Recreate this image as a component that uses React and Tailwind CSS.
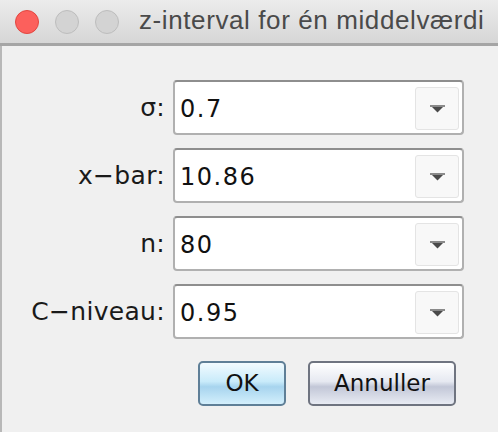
import React from "react";

function Combo({ value }) {
  return (
    <div className="flex h-[55px] w-[291px] items-stretch rounded-[4px] border-2 border-[#b0b0b0] border-t-[#8e8e8e] bg-white pl-[5px] pr-[3px] pt-[5px] pb-[3px]">
      <div className="flex flex-1 items-center text-[24px] leading-none tracking-[1.5px] text-[#111]">
        {value}
      </div>
      <div className="flex w-[44px] items-center justify-center rounded-[3px] border border-[#e4e4e4] bg-[#f8f8f8]">
        <svg width="15" height="8" viewBox="0 0 15 8">
          <rect x="0" y="0" width="15" height="2" fill="#8a8a8a" />
          <polygon points="2,2 13,2 7.5,7.5" fill="#4a4a4a" />
        </svg>
      </div>
    </div>
  );
}

export default function App() {
  const rows = [
    ["σ:", "0.7"],
    ["x−bar:", "10.86"],
    ["n:", "80"],
    ["C−niveau:", "0.95"],
  ];
  return (
    <div className="flex h-[432px] w-[498px] flex-col overflow-hidden bg-[#f0f0f0] font-['DejaVu_Sans',sans-serif]">
      <div className="flex h-[46px] shrink-0 items-center border-b-[3px] border-[#a5a5a5] bg-[linear-gradient(to_bottom,#ececec,#d6d6d6)] pl-[15px]">
        <div className="h-[24px] w-[24px] rounded-full border border-[#e2463f] bg-[#fc605c]" />
        <div className="ml-[16px] h-[24px] w-[24px] rounded-full border border-[#bdbdbd] bg-[#d3d3d3]" />
        <div className="ml-[16px] h-[24px] w-[24px] rounded-full border border-[#bdbdbd] bg-[#d3d3d3]" />
        <div className="ml-[20px] whitespace-nowrap pb-[2px] font-['Liberation_Sans',sans-serif] text-[26px] tracking-[0.6px] text-[#4a4a4a]">
          z-interval for én middelværdi
        </div>
      </div>
      <div className="flex flex-1 flex-col border-l-2 border-[#b8b8b8] pt-[34px]">
        <div className="grid grid-cols-[163px_291px] gap-x-[8px] gap-y-[13px]">
          {rows.map(([label, value]) => (
            <React.Fragment key={label}>
              <div className="flex items-center justify-end text-[25px] leading-none tracking-[0.3px] text-[#1a1a1a]">
                {label}
              </div>
              <Combo value={value} />
            </React.Fragment>
          ))}
        </div>
        <div className="mt-[22px] flex justify-end gap-[22px] pr-[42px]">
          <button className="flex h-[45px] w-[88px] items-center justify-center rounded-[5px] border-2 border-[#5f7f97] bg-[linear-gradient(to_bottom,#f2fbff_0%,#c9ebfa_45%,#a7d4ee_58%,#d3effc_100%)] text-[23px] text-[#111]">
            OK
          </button>
          <button className="flex h-[45px] w-[148px] items-center justify-center rounded-[5px] border-2 border-[#6f7480] bg-[linear-gradient(to_bottom,#ffffff_0%,#e6e9f1_45%,#c2c7d7_58%,#e8ebf3_100%)] text-[23px] text-[#111]">
            Annuller
          </button>
        </div>
      </div>
    </div>
  );
}
